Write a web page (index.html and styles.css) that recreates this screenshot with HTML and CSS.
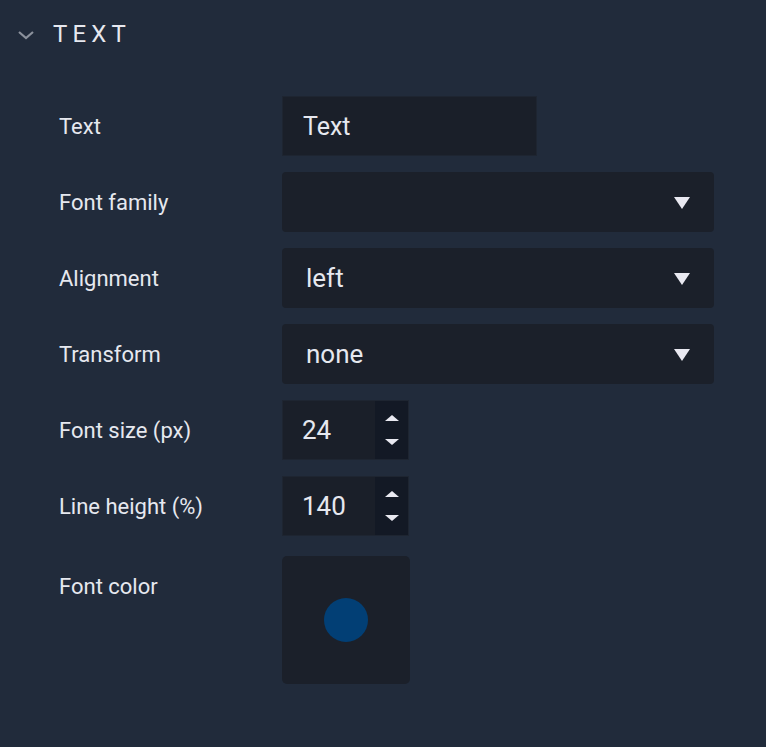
FILE: index.html
```html
<!DOCTYPE html>
<html>
<head>
<meta charset="utf-8">
<link rel="stylesheet" href="styles.css">
</head>
<body>
<section class="panel">
  <header class="panel-head">
    <svg class="chev" width="18" height="10" viewBox="0 0 18 10"><path d="M2 2 L9 8 L16 2" fill="none" stroke="#8b919c" stroke-width="2.2"/></svg>
    <span class="title">TEXT</span>
  </header>
  <div class="rows">
    <div class="row">
      <label class="label">Text</label>
      <div class="input text-input">Text</div>
    </div>
    <div class="row">
      <label class="label">Font family</label>
      <div class="select"><span></span><span class="tri"></span></div>
    </div>
    <div class="row">
      <label class="label">Alignment</label>
      <div class="select"><span>left</span><span class="tri"></span></div>
    </div>
    <div class="row">
      <label class="label">Transform</label>
      <div class="select"><span>none</span><span class="tri"></span></div>
    </div>
    <div class="row">
      <label class="label">Font size (px)</label>
      <div class="number"><span class="val">24</span><span class="step"><span class="up"></span><span class="down"></span></span></div>
    </div>
    <div class="row">
      <label class="label">Line height (%)</label>
      <div class="number"><span class="val">140</span><span class="step"><span class="up"></span><span class="down"></span></span></div>
    </div>
    <div class="row row-color">
      <label class="label">Font color</label>
      <div class="swatch"><span class="dot"></span></div>
    </div>
  </div>
</section>
</body>
</html>
```
FILE: styles.css
```css
html, body {
  margin: 0;
  padding: 0;
  background: #212b3b;
  height: 100%;
}
body {
  font-family: Roboto, "Noto Sans", sans-serif;
  color: #e6e8ef;
}
.panel-head {
  display: flex;
  align-items: center;
  height: 68px;
  padding-left: 17px;
}
.chev {
  margin-right: 18px;
  margin-top: 1px;
}
.title {
  font-size: 24px;
  letter-spacing: 5.2px;
  color: #e6e8ef;
}
.rows {
  display: flex;
  flex-direction: column;
  gap: 16px;
  padding: 28px 0 0 59px;
}
.row {
  display: flex;
  align-items: flex-start;
}
.row-color {
  margin-top: 4px;
}
.label {
  width: 223px;
  height: 60px;
  font-size: 22px;
  line-height: 62px;
  color: #e6e8ef;
}
.input {
  height: 60px;
  box-sizing: border-box;
  font-size: 25px;
  display: flex;
  align-items: center;
}
.text-input {
  width: 255px;
  background: #1a1f29;
  border: 1px solid #1e2531;
  padding-left: 20px;
}
.select {
  width: 432px;
  height: 60px;
  box-sizing: border-box;
  background: #1b202a;
  border-radius: 4px;
  display: flex;
  align-items: center;
  justify-content: space-between;
  padding: 0 24px;
  font-size: 26px;
}
.tri {
  width: 0;
  height: 0;
  border-left: 8px solid transparent;
  border-right: 8px solid transparent;
  border-top: 12px solid #e9e9f1;
  margin-top: 1px;
}
.number {
  width: 127px;
  height: 60px;
  display: flex;
  background: #1a1f29;
  border: 1px solid #1e2531;
  box-sizing: border-box;
}
.val {
  flex: 1;
  display: flex;
  align-items: center;
  padding-left: 19px;
  font-size: 26px;
}
.step {
  width: 33px;
  background: #131925;
  display: flex;
  flex-direction: column;
  align-items: center;
  justify-content: center;
  gap: 18px;
}
.up, .down {
  width: 0;
  height: 0;
  border-left: 7px solid transparent;
  border-right: 7px solid transparent;
}
.up {
  border-bottom: 6px solid #e9e9f1;
}
.down {
  border-top: 6px solid #e9e9f1;
}
.swatch {
  width: 128px;
  height: 128px;
  background: #1b202a;
  border-radius: 5px;
  display: flex;
  align-items: center;
  justify-content: center;
}
.dot {
  width: 44px;
  height: 44px;
  border-radius: 50%;
  background: #023f75;
}
```
